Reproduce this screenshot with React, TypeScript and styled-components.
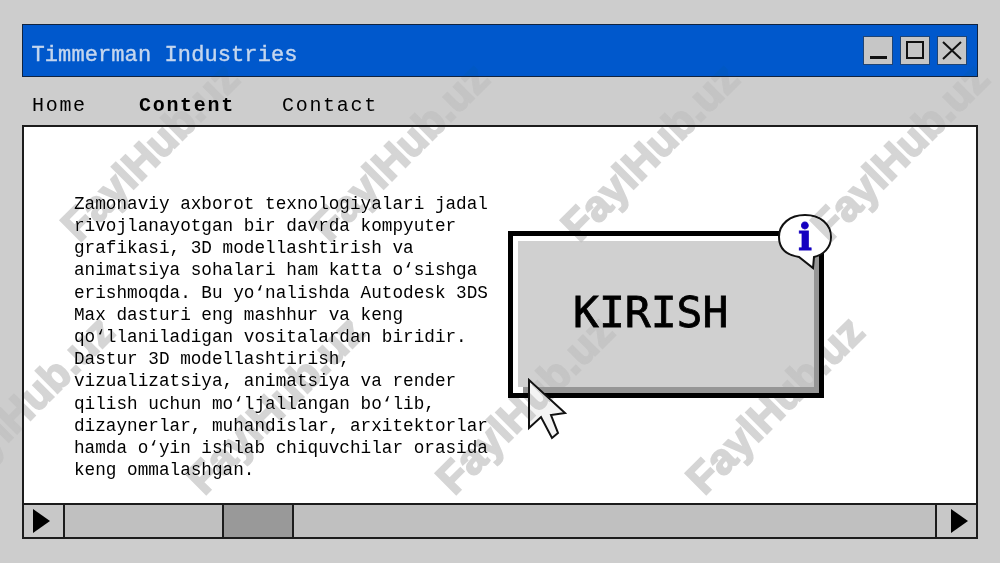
import styled, { createGlobalStyle } from "styled-components";

const GlobalStyle = createGlobalStyle`
    html, body {
        margin: 0;
        padding: 0;
        width: 1000px;
        height: 563px;
        overflow: hidden;
        background: #cdcdcd;
    }
`;

const Page = styled.div`
    position: relative;
    box-sizing: border-box;
    width: 1000px;
    height: 563px;
    padding: 24px 22px;
    display: flex;
    flex-direction: column;
    overflow: hidden;
    background: #cdcdcd;
    font-family: "Liberation Mono", monospace;
    color: #000;
`;

const TitleBar = styled.header`
    box-sizing: border-box;
    height: 53px;
    display: flex;
    align-items: center;
    justify-content: space-between;
    padding: 0 10.5px 0 8.5px;
    background: #0058cc;
    border: 1.5px solid #10233f;
`;

const Title = styled.h1`
    margin: 11px 0 0;
    font-size: 22px;
    font-weight: 400;
    letter-spacing: 0.1px;
    color: #c4d6ee;
    -webkit-text-stroke: 0.4px #c4d6ee;
`;

const WindowButtons = styled.div`
    display: flex;
    gap: 7px;
`;

const WindowButton = styled.button`
    box-sizing: border-box;
    width: 30px;
    height: 29px;
    padding: 0;
    display: flex;
    align-items: center;
    justify-content: center;
    background: #c6c6c6;
    border: 1px solid #1f4474;
`;

const Nav = styled.nav`
    box-sizing: border-box;
    height: 48px;
    padding: 9px 0 0 10px;
    display: grid;
    grid-template-columns: 107px 143px auto;
    align-items: center;
`;

const NavItem = styled.span<{ $active?: boolean }>`
    font-size: 20px;
    letter-spacing: 1.7px;
    font-weight: ${(p) => (p.$active ? 700 : 400)};
`;

const Panel = styled.main`
    box-sizing: border-box;
    height: 379px;
    display: flex;
    background: #fff;
    border: 2px solid #1c1c1c;
    border-bottom: none;
`;

const Body = styled.p`
    width: 430px;
    margin: 66px 0 0 50px;
    font-size: 17.7px;
    line-height: 22.2px;
`;

const CardColumn = styled.div`
    padding: 104px 0 0 4px;
`;

const Card = styled.div`
    position: relative;
    box-sizing: border-box;
    width: 316px;
    height: 167px;
    border: 5px solid #000;
    background: #fff;
    padding: 5px 0 0 5px;
`;

const CardFace = styled.div`
    box-sizing: border-box;
    width: 296px;
    height: 146px;
    padding: 0 0 4px 55px;
    display: flex;
    align-items: center;
    background: #d0d0d0;
    box-shadow: 5px 6px 0 #969696;
    font-family: "DejaVu Sans Mono", monospace;
    font-size: 43px;
    -webkit-text-stroke: 0.8px #000;
`;

const InfoBubble = styled.svg`
    position: absolute;
    top: -24px;
    right: -15px;
`;

const Pointer = styled.svg`
    position: absolute;
    left: 14px;
    top: 142px;
`;

const ScrollBar = styled.div`
    box-sizing: border-box;
    height: 36px;
    display: flex;
    background: #c0c0c0;
    border: 2px solid #1c1c1c;
`;

const ScrollArrow = styled.div<{ $side: "left" | "right" }>`
    box-sizing: border-box;
    width: 41px;
    flex: none;
    display: flex;
    align-items: center;
    justify-content: center;
    background: #c8c8c8;
    padding-${(p) => (p.$side === "left" ? "right" : "left")}: 5px;
    border-${(p) => (p.$side === "left" ? "right" : "left")}: 2px solid #1c1c1c;
`;

const Track = styled.div`
    flex: 1;
    display: flex;
    padding-left: 157px;
`;

const Thumb = styled.div`
    box-sizing: border-box;
    width: 72px;
    background: #999;
    border-left: 2px solid #1c1c1c;
    border-right: 2px solid #1c1c1c;
`;

const Mark = styled.span<{ $x: number; $y: number }>`
    position: absolute;
    left: ${(p) => p.$x}px;
    top: ${(p) => p.$y}px;
    transform: translate(-50%, -50%) rotate(-45deg);
    font-family: "Liberation Sans", sans-serif;
    font-weight: 700;
    font-size: 43px;
    white-space: nowrap;
    color: #bfbfbf;
    -webkit-text-stroke: 2px #bfbfbf;
    opacity: 0.66;
    mix-blend-mode: darken;
    pointer-events: none;
`;

const marks = [
    [150, 152], [400, 152], [650, 152], [900, 152],
    [25, 405], [275, 405], [525, 405], [775, 405],
];

const Arrow = () => (
    <svg width="17" height="24" viewBox="0 0 17 24">
        <path d="M0 0 L17 12 L0 24 Z" fill="#000" />
    </svg>
);

export default function App() {
    return (
        <Page>
            <GlobalStyle />
            <TitleBar>
                <Title>Timmerman Industries</Title>
                <WindowButtons>
                    <WindowButton>
                        <svg width="28" height="27" viewBox="0 0 28 27">
                            <rect x="6" y="19" width="17" height="3" fill="#111" />
                        </svg>
                    </WindowButton>
                    <WindowButton>
                        <svg width="28" height="27" viewBox="0 0 28 27">
                            <rect x="6" y="5" width="16" height="16" fill="none" stroke="#111" strokeWidth="2" />
                        </svg>
                    </WindowButton>
                    <WindowButton>
                        <svg width="28" height="27" viewBox="0 0 28 27">
                            <path d="M5 5 L23 22 M23 5 L5 22" stroke="#111" strokeWidth="2" />
                        </svg>
                    </WindowButton>
                </WindowButtons>
            </TitleBar>
            <Nav>
                <NavItem>Home</NavItem>
                <NavItem $active>Content</NavItem>
                <NavItem>Contact</NavItem>
            </Nav>
            <Panel>
                <Body>
                    Zamonaviy axborot texnologiyalari jadal rivojlanayotgan bir davrda kompyuter grafikasi, 3D modellashtirish va animatsiya sohalari ham katta o‘sishga erishmoqda. Bu yo‘nalishda Autodesk 3DS Max dasturi eng mashhur va keng qo‘llaniladigan vositalardan biridir. Dastur 3D modellashtirish, vizualizatsiya, animatsiya va render qilish uchun mo‘ljallangan bo‘lib, dizaynerlar, muhandislar, arxitektorlar hamda o‘yin ishlab chiquvchilar orasida keng ommalashgan.
                </Body>
                <CardColumn>
                    <Card>
                        <CardFace>KIRISH</CardFace>
                        <InfoBubble width="58" height="58" viewBox="0 0 58 58">
                            <path d="M29 3 C44 3 55 12 55 25 C55 36 47 43 38 45 L37 56 L23 45 C10 43 3 36 3 25 C3 12 14 3 29 3 Z" fill="#fff" stroke="#111" strokeWidth="2" />
                            <text x="29" y="38" textAnchor="middle" fontFamily="DejaVu Serif" fontWeight="700" fontSize="37" fill="#1500c0" stroke="#1500c0" strokeWidth="0.8">i</text>
                        </InfoBubble>
                        <Pointer width="40" height="62" viewBox="0 0 40 62">
                            <path d="M2 2 L2 50 L14 39 L25 60 L31 55 L24 37 L38 35 Z" fill="#f4f4f4" stroke="#111" strokeWidth="2" />
                        </Pointer>
                    </Card>
                </CardColumn>
            </Panel>
            <ScrollBar>
                <ScrollArrow $side="left"><Arrow /></ScrollArrow>
                <Track><Thumb /></Track>
                <ScrollArrow $side="right"><Arrow /></ScrollArrow>
            </ScrollBar>
            {marks.map(([x, y]) => (
                <Mark key={`${x}-${y}`} $x={x} $y={y}>FaylHub.uz</Mark>
            ))}
        </Page>
    );
}
